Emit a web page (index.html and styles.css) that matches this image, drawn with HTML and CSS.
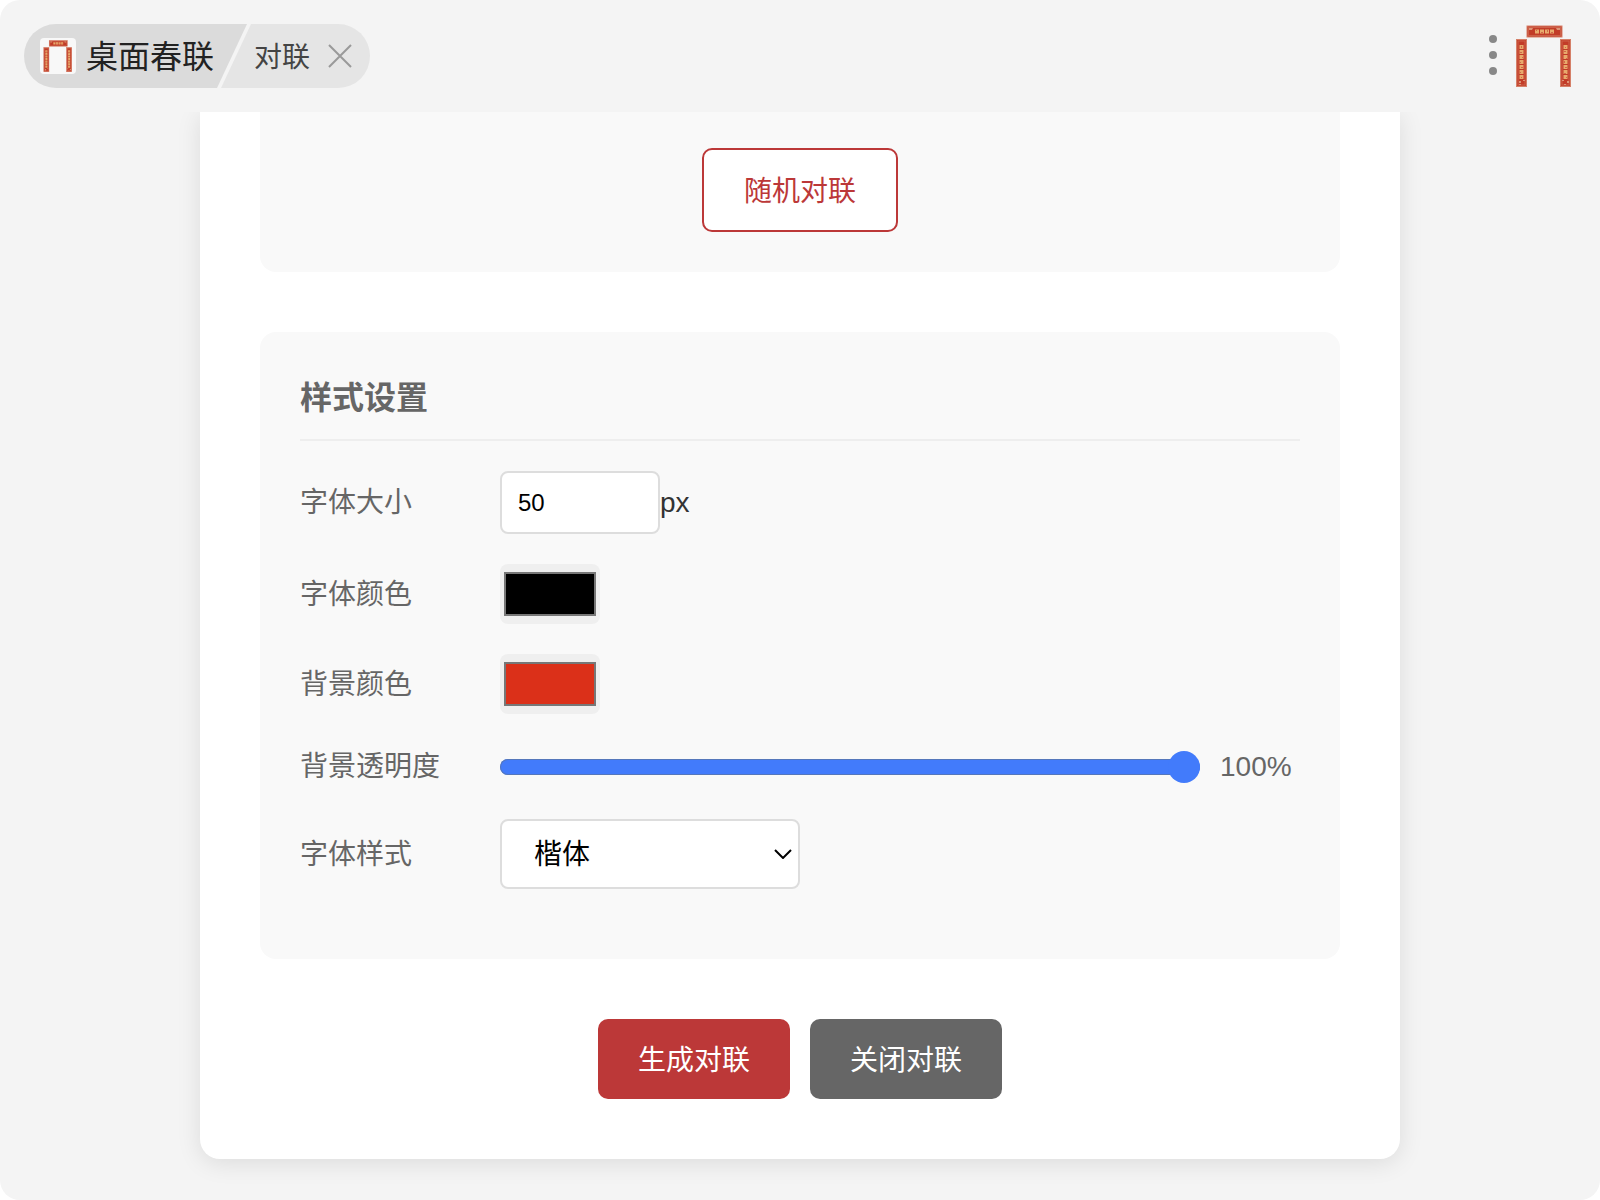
FILE: index.html
```
<!DOCTYPE html>
<html lang="zh-CN">
<head>
    <meta charset="UTF-8">
    <meta name="viewport" content="width=device-width, initial-scale=1.0">
    <title>桌面春联</title>
    <link rel="stylesheet" href="styles.css">
</head>
<body>
    <svg class="sprite" aria-hidden="true">
        <symbol id="couplet" viewBox="0 0 56 62">
            <g fill="#c23c28" stroke="#d58068" stroke-width="1">
                <rect x="11" y="1" width="35" height="11"/>
                <rect x="0.500" y="14.500" width="10" height="47"/>
                <rect x="44.500" y="14.500" width="10" height="47"/>
            </g>
            <g fill="none" stroke="#cc6048" stroke-width="1">
                <rect x="12.500" y="2.500" width="32" height="8"/>
                <rect x="2" y="16" width="7" height="44"/>
                <rect x="46" y="16" width="7" height="44"/>
            </g>
            <g fill="none" stroke="#e8aa6c" stroke-width="4">
                <path d="M19 6.500h19" stroke-dasharray="4 1"/>
                <path d="M5.500 20v34" stroke-dasharray="4 1"/>
                <path d="M49.500 20v34" stroke-dasharray="4 1"/>
            </g>
            <g fill="#d0694a">
                <path d="M20 5h1v1h-1zM25 7h2v1h-2zM31 5h1v2h-1zM35 7h2v1h-2zM5 21h1v2H5zM4 27h2v1H4zM6 32h1v1H6zM4 37h1v1H4zM5 42h2v1H5zM4 47h1v1H4zM5 52h1v1H5zM49 22h1v1h-1zM48 26h2v1h-2zM50 33h1v1h-1zM48 36h1v2h-1zM49 42h2v1h-2zM48 48h2v1h-2zM50 52h1v1h-1z"/>
            </g>
            <g fill="#dd9476">
                <path d="M13 3h4l-1 2h-3zM40 3h4v2h-3zM3 56h2v2H3zM7 55h2v1H7zM3 59h2v1H3zM46 55h2v1h-2zM51 56h2v2h-2zM48 59h2v1h-2z"/>
            </g>
        </symbol>
    </svg>

    <div class="window">
        <header class="topbar">
            <div class="tabs">
                <div class="tab tab-app">
                    <svg class="app-icon"><use href="#couplet"/></svg>
                    <span>桌面春联</span>
                </div>
                <div class="tab tab-page">
                    <span>对联</span>
                    <button type="button" class="close" aria-label="关闭">
                        <svg viewBox="0 0 24 24"><path d="M1 1l22 22M23 1L1 23"/></svg>
                    </button>
                </div>
            </div>
            <div class="tools">
                <button type="button" class="more" aria-label="更多">
                    <svg viewBox="0 0 8 42"><circle cx="4" cy="4" r="4"/><circle cx="4" cy="20" r="4"/><circle cx="4" cy="36" r="4"/></svg>
                </button>
                <svg class="logo"><use href="#couplet"/></svg>
            </div>
        </header>

        <main class="content">
            <div class="container">
                <section class="section section-text">
                    <button type="button" class="btn btn-outline">随机对联</button>
                </section>

                <section class="section">
                    <h2>样式设置</h2>
                    <div class="row">
                        <label for="fontSize">字体大小</label>
                        <input type="text" inputmode="numeric" id="fontSize" value="50">
                        <span>px</span>
                    </div>
                    <div class="row">
                        <label for="fontColor">字体颜色</label>
                        <input type="color" id="fontColor" value="#000000">
                    </div>
                    <div class="row">
                        <label for="bgColor">背景颜色</label>
                        <input type="color" id="bgColor" value="#db3019">
                    </div>
                    <div class="row">
                        <label for="opacity">背景透明度</label>
                        <input type="range" id="opacity" min="0" max="100" value="100">
                        <output class="value" for="opacity">100%</output>
                    </div>
                    <div class="row">
                        <label for="fontFamily">字体样式</label>
                        <select id="fontFamily">
                            <option>楷体</option>
                            <option>宋体</option>
                            <option>黑体</option>
                        </select>
                    </div>
                </section>

                <div class="actions">
                    <button type="button" class="btn btn-primary">生成对联</button>
                    <button type="button" class="btn btn-secondary">关闭对联</button>
                </div>
            </div>
        </main>
    </div>
</body>
</html>
```

FILE: styles.css
```
* {
    margin: 0;
    padding: 0;
    box-sizing: border-box;
}

body {
    background: #fff;
    color: #333;
    font-family: "Liberation Sans", "Noto Sans CJK SC", sans-serif;
    font-size: 28px;
    line-height: 45px;
}

button,
input,
select {
    font-family: inherit;
}

.sprite {
    display: none;
}

.window {
    display: flex;
    flex-direction: column;
    min-height: 100vh;
    background: #f4f4f4;
    border-radius: 20px;
    overflow: hidden;
}

/* Top bar */
.topbar {
    display: flex;
    justify-content: space-between;
    align-items: center;
    height: 112px;
    padding: 0 28px 0 24px;
}

.tabs {
    display: flex;
    height: 64px;
    border-radius: 32px;
    overflow: hidden;
}

.tab {
    display: flex;
    align-items: center;
}

.tab span {
    padding-top: 2px;
}

.tab-app {
    gap: 10px;
    padding: 0 33px 0 16px;
    background: #dbdbdb;
    color: #222;
    font-size: 32px;
    clip-path: polygon(0 0, 100% 0, calc(100% - 30px) 100%, 0 100%);
}

.tab-page {
    gap: 18px;
    margin-left: -26px;
    padding: 0 18px 0 33px;
    background: #e5e5e5;
    color: #444;
    clip-path: polygon(30px 0, 100% 0, 100% 100%, 0 100%);
}

.app-icon {
    width: 36px;
    height: 36px;
    padding: 2px;
    background: #f8f8f8;
    border-radius: 4px;
}

.close,
.more {
    display: flex;
    border: 0;
    background: none;
    cursor: pointer;
}

.close svg {
    width: 24px;
    height: 24px;
    fill: none;
    stroke: #999;
    stroke-width: 2;
}

.tools {
    display: flex;
    align-items: center;
    gap: 19px;
}

.more svg {
    width: 8px;
    height: 42px;
    fill: #888;
}

.logo {
    width: 56px;
    height: 62px;
}

/* Settings card */
.content {
    flex: 1;
    padding: 0 200px 40px;
    overflow: hidden;
}

.container {
    padding: 0 60px 60px;
    background: #fff;
    border-radius: 0 0 20px 20px;
    box-shadow: 0 4px 24px rgba(0, 0, 0, 0.1);
}

.section {
    margin-bottom: 60px;
    padding: 40px;
    background: #f9f9f9;
    border-radius: 16px;
}

.section-text {
    display: flex;
    justify-content: center;
    padding-top: 36px;
    border-radius: 0 0 16px 16px;
}

.section h2 {
    margin-bottom: 30px;
    padding: 1px 0 15px;
    border-bottom: 2px solid #eee;
    color: #666;
    font-size: 32px;
    line-height: 51px;
}

.row {
    display: flex;
    align-items: center;
    margin-bottom: 30px;
}

.row label {
    width: 200px;
    color: #666;
}

input[type="text"] {
    width: 160px;
    height: 63px;
    padding: 0 16px;
    border: 2px solid #ddd;
    border-radius: 8px;
    background: #fff;
    color: #000;
    font-size: 24px;
}

input[type="color"] {
    width: 100px;
    height: 60px;
    padding: 8px 4px;
    border: 0;
    border-radius: 8px;
    background: #efefef;
}

input[type="color"]::-webkit-color-swatch-wrapper {
    padding: 0;
}

input[type="color"]::-webkit-color-swatch {
    border: 2px solid #777;
}

input[type="range"] {
    flex: 1;
    height: 32px;
    appearance: none;
    background: none;
}

input[type="range"]::-webkit-slider-runnable-track {
    height: 16px;
    border-radius: 8px;
    background: #427bfb;
    box-shadow: inset 0 0 0 1px #5577bb;
}

input[type="range"]::-webkit-slider-thumb {
    width: 32px;
    height: 32px;
    margin-top: -8px;
    appearance: none;
    border-radius: 50%;
    background: #427bfb;
}

.value {
    width: 80px;
    margin-left: 20px;
    color: #666;
}

select {
    width: 300px;
    height: 70px;
    padding: 0 32px;
    appearance: none;
    border: 2px solid #ddd;
    border-radius: 8px;
    background: #fff url('data:image/svg+xml,<svg xmlns="http://www.w3.org/2000/svg" width="18" height="10" fill="none" stroke="black" stroke-width="2"><path d="M1 1l8 8 8-8"/></svg>') no-repeat right 6px center;
    color: #000;
    font-size: 28px;
}

/* Buttons */
.btn {
    height: 80px;
    padding: 0 40px 3px;
    border: 0;
    border-radius: 10px;
    color: #fff;
    font-size: 28px;
    cursor: pointer;
}

.btn-primary {
    background: #bc3838;
}

.btn-secondary {
    background: #666;
}

.btn-outline {
    height: 84px;
    border: 2px solid #bc3838;
    background: #fff;
    color: #bc3838;
}

.actions {
    display: flex;
    justify-content: center;
    gap: 20px;
}
```
